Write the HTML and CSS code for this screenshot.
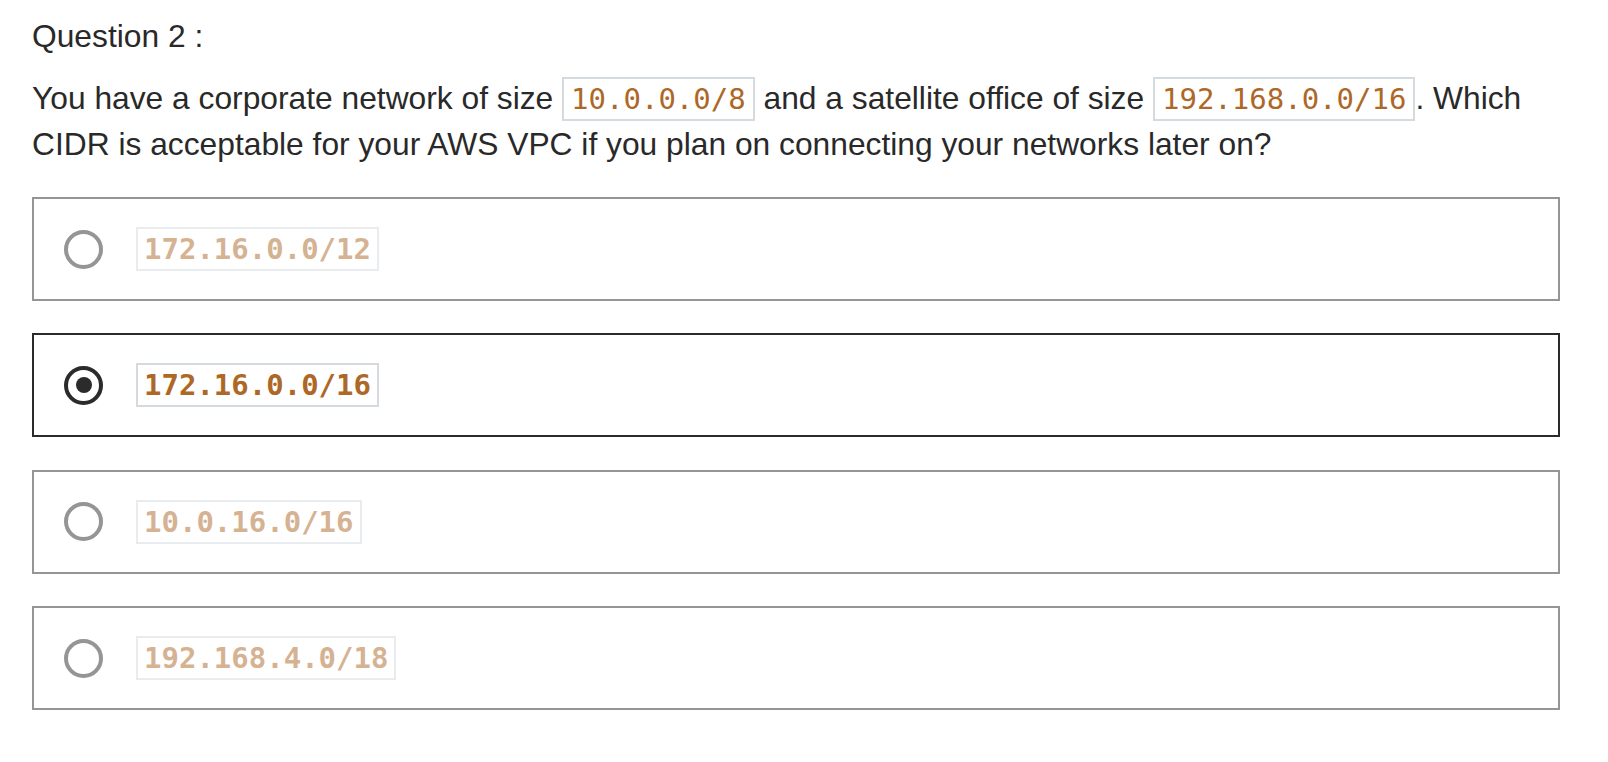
FILE: index.html
```html
<!DOCTYPE html>
<html lang="en">
<head>
<meta charset="utf-8">
<title>Question 2</title>
<link rel="stylesheet" href="styles.css">
</head>
<body>
<main class="quiz">
  <h2 class="quiz-title">Question 2 :</h2>
  <p class="quiz-text">You have a corporate network of size <code class="chip">10.0.0.0/8</code> and a satellite office of size <code class="chip">192.168.0.0/16</code>. Which CIDR is acceptable for your AWS VPC if you plan on connecting your networks later on?</p>
  <div class="options">
    <label class="option">
      <span class="radio"></span>
      <code class="chip chip-opt">172.16.0.0/12</code>
    </label>
    <label class="option is-selected">
      <span class="radio"></span>
      <code class="chip chip-opt">172.16.0.0/16</code>
    </label>
    <label class="option">
      <span class="radio"></span>
      <code class="chip chip-opt">10.0.16.0/16</code>
    </label>
    <label class="option">
      <span class="radio"></span>
      <code class="chip chip-opt">192.168.4.0/18</code>
    </label>
  </div>
</main>
</body>
</html>
```

FILE: styles.css
```css
html, body {
  margin: 0;
  padding: 0;
  background: #ffffff;
}

body {
  font-family: "Liberation Sans", Arial, sans-serif;
  color: #292929;
}

.quiz {
  padding: 14px 48px 0 32px;
}

.quiz-title {
  margin: 0 0 16px;
  font-size: 31.75px;
  line-height: 45.7px;
  font-weight: 400;
}

.quiz-text {
  margin: 0 0 29px;
  font-size: 31.75px;
  line-height: 45.7px;
}

.chip {
  font-family: "DejaVu Sans Mono", monospace;
  font-size: 29px;
  color: #ad6827;
  border: 2px solid #d5dadf;
  padding: 3px 7px;
  background: #ffffff;
}

.options {
  display: flex;
  flex-direction: column;
  gap: 32.3px;
}

.option {
  display: flex;
  align-items: center;
  gap: 33px;
  height: 104px;
  box-sizing: border-box;
  border: 2px solid #959595;
  padding-left: 30px;
}

.radio {
  width: 39px;
  height: 39px;
  box-sizing: border-box;
  border: 4px solid #959595;
  border-radius: 50%;
  display: flex;
  align-items: center;
  justify-content: center;
  flex: none;
}

.chip-opt {
  display: inline-block;
  line-height: normal;
  font-weight: 700;
  padding: 3px 6px;
  opacity: 0.5;
}

.option.is-selected {
  border-color: #2b2b2b;
}

.option.is-selected .radio {
  border-color: #2b2b2b;
}

.option.is-selected .radio::after {
  content: "";
  width: 16px;
  height: 16px;
  border-radius: 50%;
  background: #2b2b2b;
}

.option.is-selected .chip-opt {
  opacity: 1;
}
```
